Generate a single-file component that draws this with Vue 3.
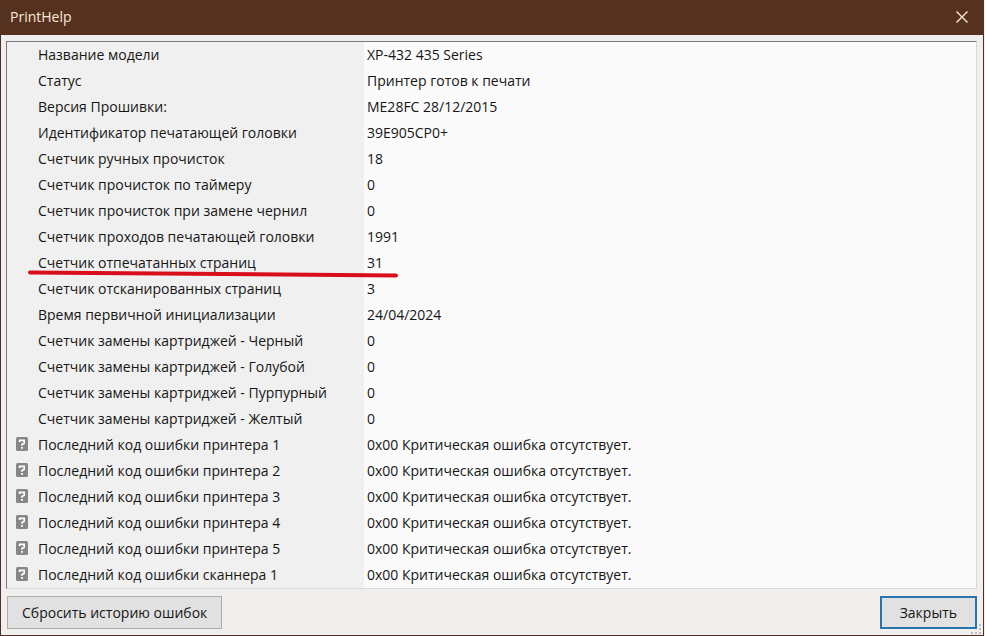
<script setup>
const rows = [
  { label: 'Название модели', value: 'XP-432 435 Series' },
  { label: 'Статус', value: 'Принтер готов к печати' },
  { label: 'Версия Прошивки:', value: 'ME28FC 28/12/2015' },
  { label: 'Идентификатор печатающей головки', value: '39E905CP0+' },
  { label: 'Счетчик ручных прочисток', value: '18' },
  { label: 'Счетчик прочисток по таймеру', value: '0' },
  { label: 'Счетчик прочисток при замене чернил', value: '0' },
  { label: 'Счетчик проходов печатающей головки', value: '1991' },
  { label: 'Счетчик отпечатанных страниц', value: '31', marked: true },
  { label: 'Счетчик отсканированных страниц', value: '3' },
  { label: 'Время первичной инициализации', value: '24/04/2024' },
  { label: 'Счетчик замены картриджей - Черный', value: '0' },
  { label: 'Счетчик замены картриджей - Голубой', value: '0' },
  { label: 'Счетчик замены картриджей - Пурпурный', value: '0' },
  { label: 'Счетчик замены картриджей - Желтый', value: '0' },
  ...[
    'принтера 1', 'принтера 2', 'принтера 3', 'принтера 4', 'принтера 5', 'сканнера 1',
  ].map((name) => ({
    label: `Последний код ошибки ${name}`,
    value: '0x00 Критическая ошибка отсутствует.',
    help: true,
  })),
]
</script>

<template>
  <div class="screen">
    <main class="window">
      <header class="titlebar">
        <h1 class="title">PrintHelp</h1>
        <button class="close" type="button" aria-label="Закрыть окно">
          <svg width="14" height="14" viewBox="0 0 14 14" aria-hidden="true">
            <path d="M1.5 1.5 12.5 12.5M12.5 1.5 1.5 12.5" fill="none" stroke="#fbe9dc" stroke-width="1.4" />
          </svg>
        </button>
      </header>
      <div class="content">
        <table class="info">
          <tbody>
            <tr v-for="row in rows" :key="row.label">
              <th scope="row">
                <div class="label">
                  <span class="icon">
                    <svg v-if="row.help" width="12" height="14" viewBox="0 0 12 14" aria-hidden="true">
                      <rect width="12" height="14" rx="1.5" fill="#878787" />
                      <path d="M3.6 5V3.4H8.2V6.2L6 7.4V8.8" fill="none" stroke="#fff" stroke-width="1.7" />
                      <rect x="5.1" y="10" width="1.8" height="1.8" fill="#fff" />
                    </svg>
                  </span>
                  <span>{{ row.label }}</span>
                </div>
                <svg v-if="row.marked" class="mark" width="374" height="8" viewBox="0 0 374 8" aria-hidden="true">
                  <path d="M3 2.5C100 3.5 230 5.5 369 5.5" fill="none" stroke="#d90e1c" stroke-width="4" stroke-linecap="round" />
                </svg>
              </th>
              <td>{{ row.value }}</td>
            </tr>
          </tbody>
        </table>
        <footer class="actions">
          <button class="btn" type="button">Сбросить историю ошибок</button>
          <button class="btn primary" type="button">Закрыть</button>
        </footer>
      </div>
      <svg class="grip" width="10" height="10" viewBox="0 0 10 10" aria-hidden="true">
        <path d="M8 0h2v2H8zM8 4h2v2H8zM8 8h2v2H8zM4 8h2v2H4zM0 8h2v2H0z" fill="#b4bfca" />
      </svg>
    </main>
  </div>
</template>

<style>
body {
  margin: 0;
  background: #f4f0ee;
}
</style>

<style scoped>
.screen {
  padding-right: 1px;
  font-family: "Open Sans", "Noto Sans", sans-serif;
  font-size: 14px;
  line-height: 26px;
  color: #161616;
}

.window {
  position: relative;
  box-sizing: border-box;
  min-height: 100vh;
  border: 1px solid #4e3029;
  border-top: 0;
  background: #f1efee;
}

.titlebar {
  display: flex;
  box-sizing: border-box;
  align-items: center;
  justify-content: space-between;
  height: 35px;
  padding: 0 14px 2px 9px;
  background: #55311e;
  color: #fbe9dc;
}

.title {
  margin: 0;
  font-size: 14px;
  font-weight: 400;
}

.close {
  display: flex;
  padding: 0;
  border: 0;
  background: none;
}

.content {
  padding: 6px 6px 6px 5px;
}

.info {
  width: 100%;
  border: 1px solid #d9d9d9;
  border-top-color: #77777f;
  border-left-color: #77777f;
  border-spacing: 0;
  background: #fafafa;
}

.info th,
.info td {
  height: 26px;
  padding: 0;
  font-weight: 400;
  text-align: left;
  white-space: nowrap;
}

.info th {
  position: relative;
  width: 357px;
  background: #f0f0f0;
}

.info td {
  padding-left: 3px;
}

.label {
  display: flex;
  align-items: center;
}

.icon {
  display: flex;
  width: 22px;
  padding: 0 0 2px 9px;
}

.mark {
  position: absolute;
  z-index: 1;
  top: 20px;
  left: 20px;
}

.actions {
  display: flex;
  justify-content: space-between;
  padding: 7px 0 0 1px;
}

.btn {
  box-sizing: border-box;
  height: 33px;
  padding: 0 14px;
  border: 1px solid #adadad;
  background: #e1e1e1;
  color: inherit;
  font: inherit;
}

.primary {
  padding: 0 18px;
  border: 2px solid #2874ad;
}

.grip {
  position: absolute;
  right: 2px;
  bottom: 1px;
}
</style>
